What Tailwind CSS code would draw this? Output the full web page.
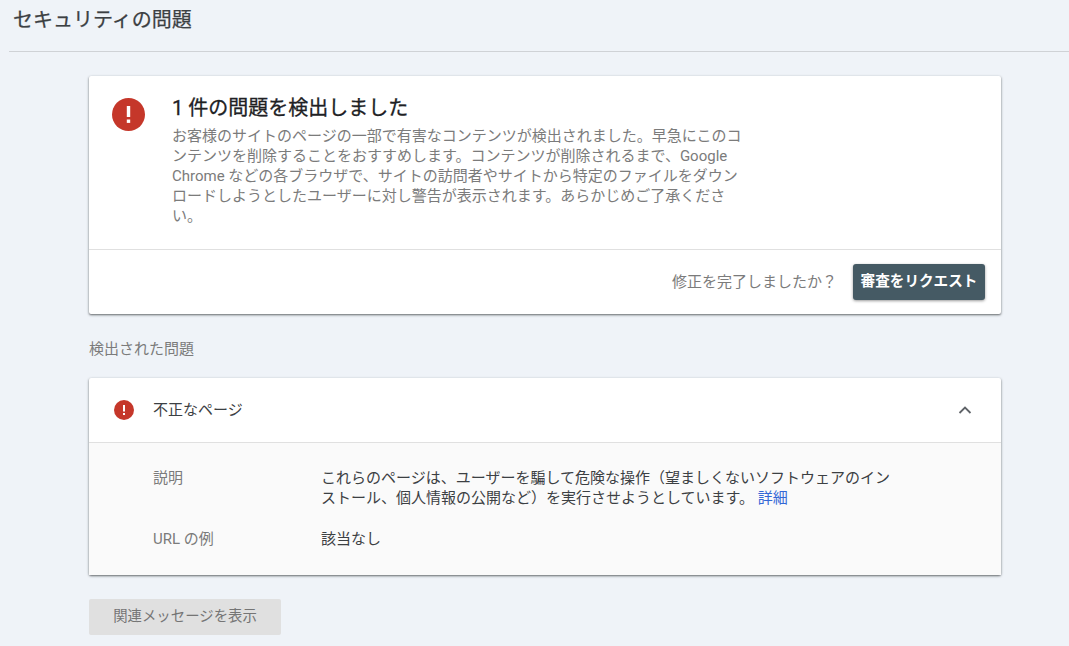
<!DOCTYPE html>
<html lang="ja">
<head>
<meta charset="UTF-8" />
<meta name="viewport" content="width=device-width, initial-scale=1.0" />
<title>セキュリティの問題</title>
<script src="https://cdn.jsdelivr.net/npm/@tailwindcss/browser@4"></script>
</head>
<body class="bg-[#eff3f8] h-[646px] overflow-hidden font-['Roboto','Noto_Sans_CJK_JP',sans-serif] text-[#202124]">

    <header class="ml-[9px] h-[52px] border-b border-[#cfd2d6] pl-[4px] pt-[8px]">
        <h1 class="text-[20px] leading-[24px] text-[#3c4043] font-normal [-webkit-text-stroke:0.25px]">セキュリティの問題</h1>
    </header>

    <main class="ml-[89px] w-[912px] pt-[24px]">
        <section class="bg-white rounded-[2px] shadow-[0_1px_2px_rgba(60,64,67,0.6),0_1px_3px_rgba(60,64,67,0.3)]">
            <div class="h-[174px] flex pl-[23px] pt-[20px] border-b border-[#e0e0e0]">
                <svg class="w-[33px] h-[33px] mt-[2px] shrink-0" viewBox="0 0 33 33">
                    <circle cx="16.5" cy="16.5" r="16.5" fill="#c5372a" />
                    <rect x="14.8" y="8" width="3.4" height="11" fill="#fff" />
                    <rect x="14.8" y="21.5" width="3.4" height="3.4" fill="#fff" />
                </svg>
                <div class="ml-[27px] w-[572px]">
                    <h2 class="text-[20px] leading-[24px] font-normal [-webkit-text-stroke:0.3px]">1 件の問題を検出しました</h2>
                    <p class="mt-[6px] text-[15px] leading-[20px] text-[#7b7b7b]">お客様のサイトのページの一部で有害なコンテンツが検出されました。早急にこのコンテンツを削除することをおすすめします。コンテンツが削除されるまで、Google Chrome などの各ブラウザで、サイトの訪問者やサイトから特定のファイルをダウンロードしようとしたユーザーに対し警告が表示されます。あらかじめご了承ください。</p>
                </div>
            </div>
            <div class="h-[64px] flex items-center justify-end pr-[16px]">
                <span class="text-[15px] text-[#7b7b7b] mr-[16px]">修正を完了しましたか？</span>
                <button class="w-[132px] h-[36px] bg-[#455a64] text-white text-[14.6px] font-bold rounded-[3px] shadow-[0_1px_3px_rgba(0,0,0,0.4)]">審査をリクエスト</button>
            </div>
        </section>

        <h3 class="mt-[25px] text-[15px] leading-[20px] text-[#7b7b7b] font-normal">検出された問題</h3>

        <section class="mt-[19px] bg-white rounded-[2px] shadow-[0_1px_2px_rgba(60,64,67,0.6),0_1px_3px_rgba(60,64,67,0.3)]">
            <div class="h-[65px] flex items-center pl-[25px] pr-[28px] border-b border-[#e0e0e0]">
                <svg class="w-[20px] h-[20px] shrink-0" viewBox="0 0 20 20">
                    <circle cx="10" cy="10" r="10" fill="#c5372a" />
                    <rect x="9" y="5" width="2" height="6.5" fill="#fff" />
                    <rect x="9" y="13" width="2" height="2" fill="#fff" />
                </svg>
                <span class="ml-[19px] text-[15px] text-[#3c4043]">不正なページ</span>
                <svg class="ml-auto w-[16px] h-[16px]" viewBox="0 0 16 16" fill="none" stroke="#5f6368" stroke-width="1.8">
                    <path d="M2.5 11 8 5.5 13.5 11" />
                </svg>
            </div>
            <div class="h-[132px] bg-[#fafafa] pl-[64px] pt-[25px] text-[15px] leading-[20px]">
                <div class="flex">
                    <div class="w-[168px] text-[#7b7b7b]">説明</div>
                    <p class="w-[580px] text-[#3c4043]">これらのページは、ユーザーを騙して危険な操作（望ましくないソフトウェアのインストール、個人情報の公開など）を実行させようとしています。 <a href="#" class="text-[#3367d6]">詳細</a></p>
                </div>
                <div class="flex mt-[21px]">
                    <div class="w-[168px] text-[#7b7b7b]">URL の例</div>
                    <div class="text-[#3c4043]">該当なし</div>
                </div>
            </div>
        </section>

        <button class="block mt-[24px] w-[192px] h-[36px] bg-[#e0e0e0] text-[#757575] text-[14.4px] rounded-[2px]">関連メッセージを表示</button>
    </main>
</body>
</html>
